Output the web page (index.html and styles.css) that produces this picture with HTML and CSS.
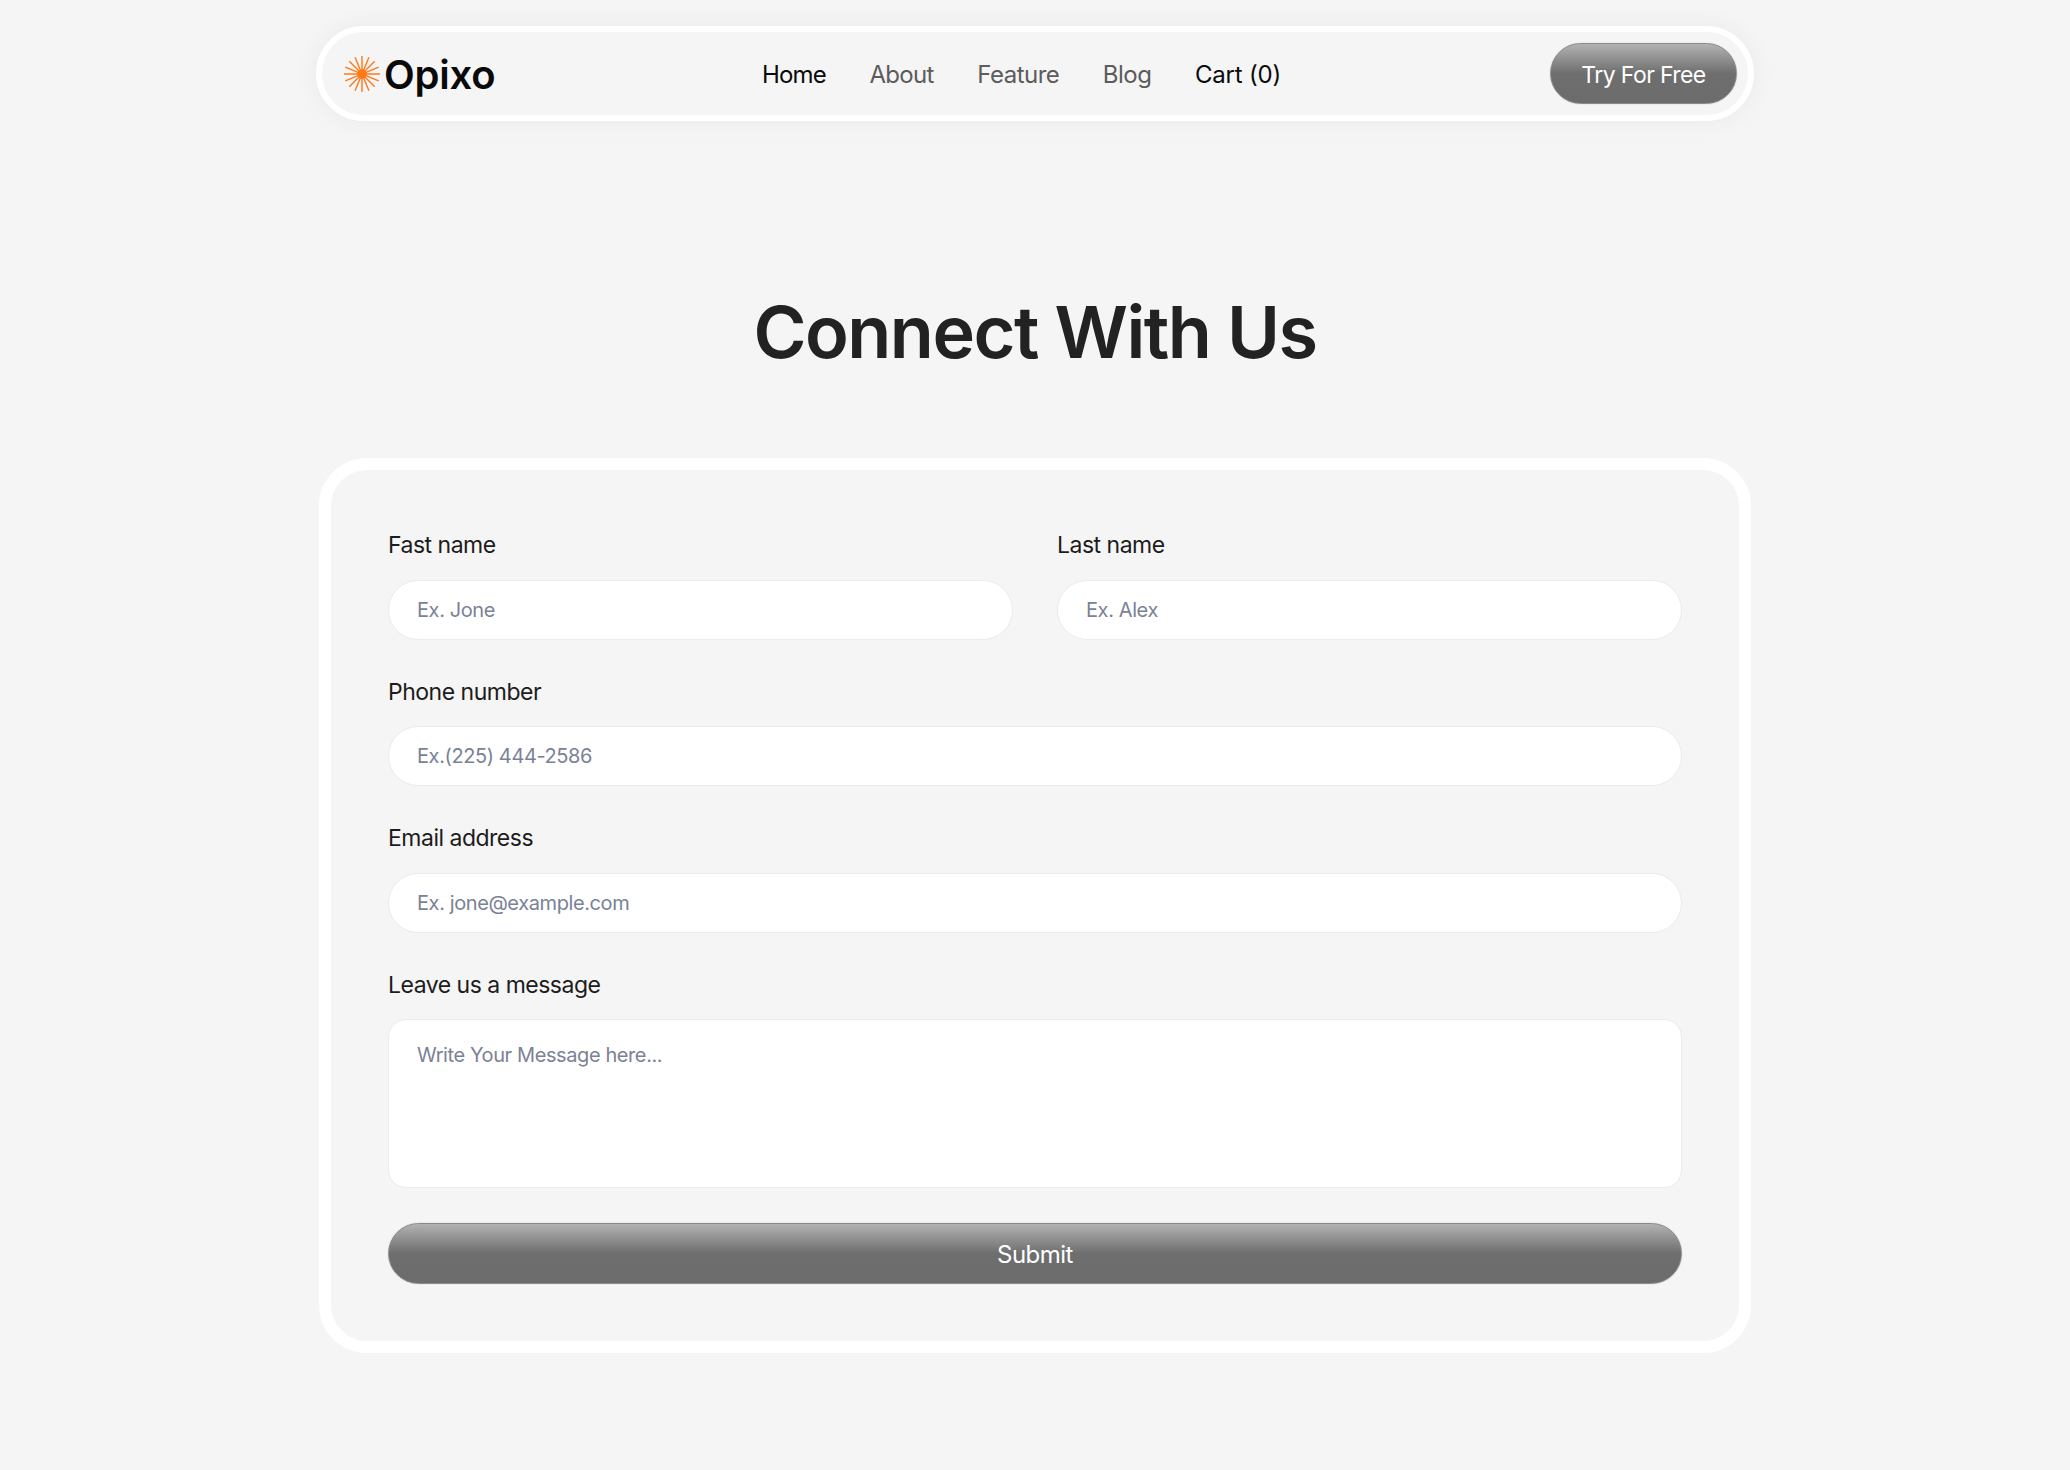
FILE: index.html
```html
<!DOCTYPE html>
<html lang="en">
<head>
<meta charset="utf-8">
<title>Opixo - Connect With Us</title>
<link rel="stylesheet" href="styles.css">
</head>
<body>
<div class="page">
  <header class="nav">
    <a class="logo" href="#">
      <svg class="logo-mark" viewBox="-20 -20 40 40" aria-hidden="true">
        <g stroke="#ff7a1a" stroke-width="1.5" stroke-linecap="butt">
          <path d="M0-19V19M-19 0H19M-13.4-13.4L13.4 13.4M-13.4 13.4L13.4-13.4"/>
          <path d="M-7.3-17.6L7.3 17.6M7.3-17.6L-7.3 17.6M-17.6-7.3L17.6 7.3M-17.6 7.3L17.6-7.3"/>
        </g>
        <circle r="5" fill="#ff7a1a"/>
      </svg>
      <span class="logo-text">Opixo</span>
    </a>
    <nav class="links">
      <a class="link active link-home" href="#">Home</a>
      <a class="link link-about" href="#">About</a>
      <a class="link" href="#">Feature</a>
      <a class="link" href="#">Blog</a>
      <a class="link active link-cart" href="#">Cart (0)</a>
    </nav>
    <a class="btn btn-try" href="#">Try For Free</a>
  </header>

  <h1 class="title">Connect With Us</h1>

  <form class="card">
    <div class="row-two">
      <label class="field">
        <span class="label">Fast name</span>
        <input class="input" type="text" placeholder="Ex. Jone">
      </label>
      <label class="field">
        <span class="label">Last name</span>
        <input class="input" type="text" placeholder="Ex. Alex">
      </label>
    </div>
    <label class="field">
      <span class="label">Phone number</span>
      <input class="input" type="text" placeholder="Ex.(225) 444-2586">
    </label>
    <label class="field">
      <span class="label">Email address</span>
      <input class="input" type="text" placeholder="Ex. jone@example.com">
    </label>
    <label class="field">
      <span class="label">Leave us a message</span>
      <textarea class="input textarea" placeholder="Write Your Message here..."></textarea>
    </label>
    <button class="btn btn-submit" type="button">Submit</button>
  </form>
</div>
</body>
</html>
```

FILE: styles.css
```css
* { box-sizing: border-box; }
html, body { margin: 0; padding: 0; }
body {
  height: 1470px;
  overflow: hidden;
  background: #f5f5f5;
  font-family: Inter, "Noto Sans", sans-serif;
  color: #1c1c1c;
}
a { text-decoration: none; color: inherit; }
.page {
  width: 1438px;
  margin: 0 auto;
  padding-top: 26px;
  display: flex;
  flex-direction: column;
  align-items: center;
}
.nav {
  width: 100%;
  height: 95px;
  border: 6px solid #fff;
  border-radius: 48px;
  background: #f5f5f5;
  box-shadow: 0 0 24px rgba(0, 0, 0, 0.05);
  padding: 0 11px 0 21px;
  display: flex;
  align-items: center;
  justify-content: space-between;
}
.logo { display: flex; align-items: center; gap: 3px; width: 187px; }
.logo-mark { width: 38px; height: 38px; display: block; flex: none; }
.logo-text { font-size: 40px; font-weight: 600; color: #0a0a0a; letter-spacing: -0.2px; padding-top: 2px; }
.links { display: flex; align-items: center; gap: 43.5px; margin-right: 37px; padding-top: 2px; }
.link { font-size: 24px; font-weight: 400; color: #5c5c5c; letter-spacing: -0.5px; }
.link.active { color: #0a0a0a; }
.link-home { letter-spacing: -0.8px; }
.link-about { letter-spacing: -0.7px; }
.link-cart { letter-spacing: -0.2px; }
.btn {
  display: flex;
  align-items: center;
  justify-content: center;
  height: 61px;
  padding-top: 2px;
  border: 1px solid #8a8a8a;
  border-radius: 31px;
  background: linear-gradient(180deg, #b2b2b2 0%, #6e6e6e 50%, #6c6c6c 100%);
  color: #fff;
  font-family: inherit;
  font-size: 24px;
  font-weight: 400;
  letter-spacing: -0.5px;
  box-shadow: 0 0 0 1px #ececec;
}
.btn-try { width: 187px; font-size: 23px; letter-spacing: -0.6px; }
.title {
  margin: 168px 0 0;
  font-size: 72px;
  line-height: 86px;
  font-weight: 600;
  color: #222;
  letter-spacing: -1.5px;
}
.card {
  width: 1432px;
  margin-top: 83px;
  border: 12px solid #fff;
  border-radius: 48px;
  padding: 58px 57px 57px;
  display: flex;
  flex-direction: column;
  gap: 35px;
}
.row-two { display: grid; grid-template-columns: 1fr 1fr; gap: 44px; }
.field { display: flex; flex-direction: column; gap: 17.5px; }
.label { font-size: 23px; line-height: 34px; color: #1c1c1c; letter-spacing: -0.5px; }
.input {
  width: 100%;
  height: 60px;
  border: 1px solid #ebebeb;
  border-radius: 30px;
  background: #fff;
  padding: 0 28px;
  font-family: inherit;
  font-size: 20px;
  color: #1c1c1c;
  letter-spacing: -0.4px;
  outline: none;
}
.input::placeholder { color: #7a8296; opacity: 1; }
.textarea {
  height: 169px;
  border-radius: 18px;
  padding: 23px 28px;
  resize: none;
  display: block;
}
.btn-submit { width: 100%; }
```
